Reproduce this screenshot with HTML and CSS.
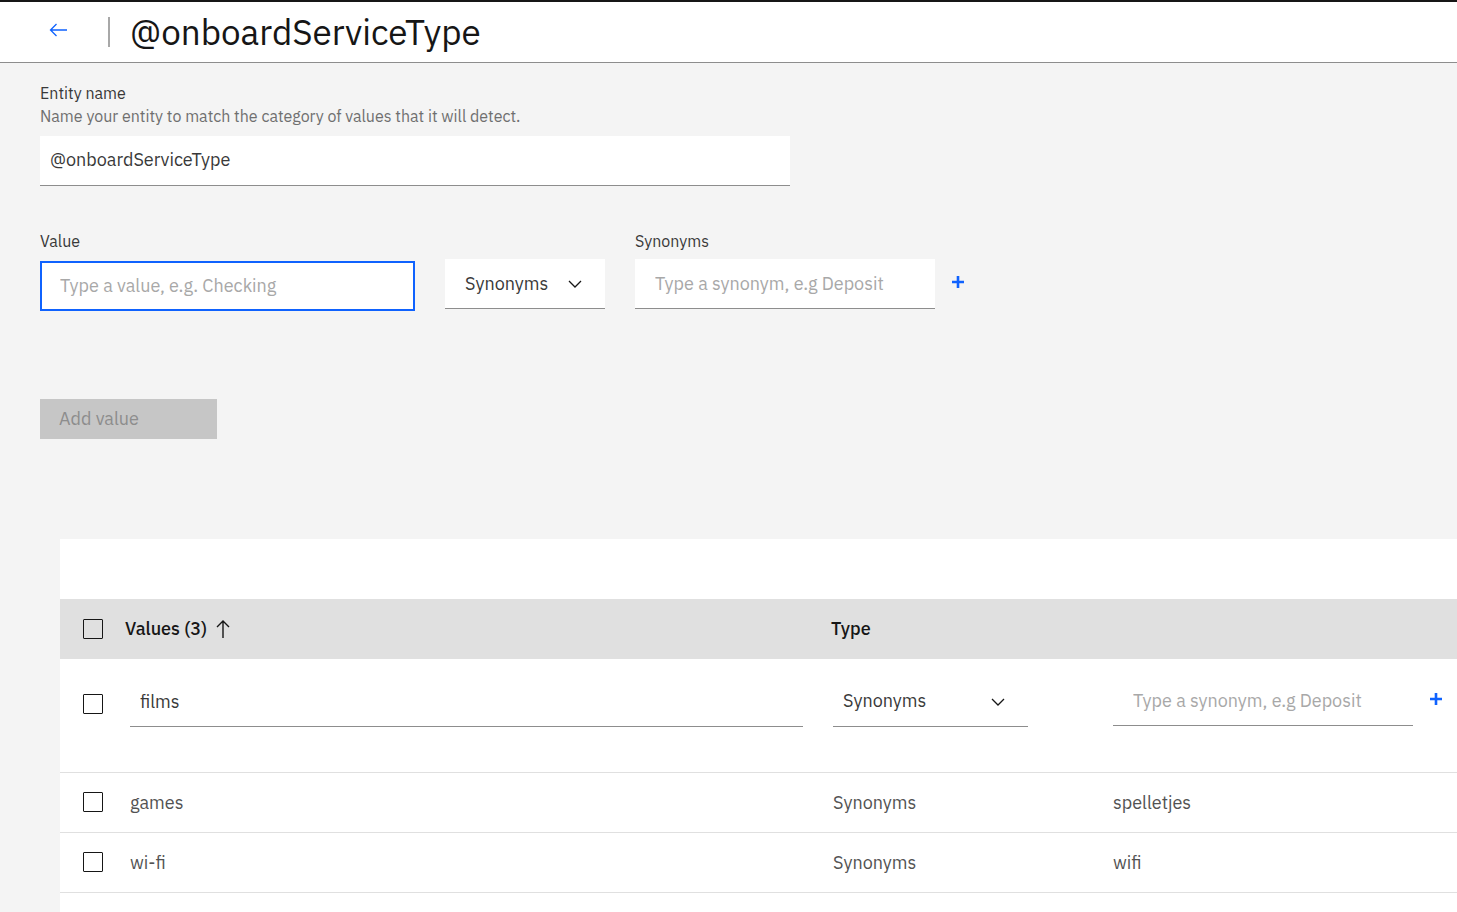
FILE: index.html
```html
<!DOCTYPE html>
<html lang="en">
<head>
<meta charset="utf-8">
<meta name="viewport" content="width=device-width, initial-scale=1">
<title>@onboardServiceType</title>
<link rel="stylesheet" href="styles.css">
</head>
<body class="page">
<header class="header">
  <a class="back" href="#" aria-label="Back">
    <svg width="20" height="20" viewBox="0 0 20 20" fill="none" stroke="currentColor" stroke-width="1.3"><path d="M18 10H1.500M7.500 4L1.500 10l6 6"/></svg>
  </a>
  <h1 class="title">@onboardServiceType</h1>
</header>
<main class="main">
  <form class="form">
    <div class="entity">
      <label class="label" for="entity">Entity name</label>
      <p class="helper" id="entity-help">Name your entity to match the category of values that it will detect.</p>
      <input class="input input-entity" id="entity" type="text" value="@onboardServiceType" aria-describedby="entity-help">
    </div>
    <div class="value-row">
      <div class="field field-value">
        <label class="label" for="value">Value</label>
        <input class="input input-active" id="value" type="text" placeholder="Type a value, e.g. Checking">
      </div>
      <div class="select field-type">
        <select class="input select-box" aria-label="Value type"><option>Synonyms</option><option>Patterns</option></select>
        <svg class="chevron" width="14" height="8" viewBox="0 0 14 8" fill="none" stroke="currentColor" stroke-width="1.3"><path d="M1 1l6 6 6-6"/></svg>
      </div>
      <div class="field field-synonym">
        <label class="label" for="synonym">Synonyms</label>
        <input class="input" id="synonym" type="text" placeholder="Type a synonym, e.g Deposit">
      </div>
      <button class="plus" type="button" aria-label="Add synonym">
        <svg width="12" height="12" viewBox="0 0 12 12" fill="none" stroke="currentColor" stroke-width="2.6"><path d="M6 0v12M0 6h12"/></svg>
      </button>
    </div>
    <button class="add" type="submit" disabled>Add value</button>
  </form>
  <section class="panel">
    <table class="table">
      <colgroup><col class="col-check"><col><col class="col-type"><col class="col-synonyms"></colgroup>
      <thead>
        <tr>
          <th class="cell-check"><input class="check" type="checkbox" aria-label="Select all values"></th>
          <th aria-sort="ascending"><button class="sort" type="button">Values (3)
            <svg width="14" height="18" viewBox="0 0 14 18" fill="none" stroke="currentColor" stroke-width="1.4"><path d="M7 18V1M1 7l6-6 6 6"/></svg></button></th>
          <th>Type</th>
          <th aria-label="Synonyms"></th>
        </tr>
      </thead>
      <tbody>
        <tr class="row-edit">
          <td class="cell-check"><input class="check" type="checkbox" aria-label="Select films"></td>
          <td class="cell-value"><input class="input" type="text" value="films" aria-label="Value"></td>
          <td class="cell-type">
            <div class="select">
              <select class="input select-box" aria-label="Type"><option>Synonyms</option><option>Patterns</option></select>
              <svg class="chevron" width="14" height="8" viewBox="0 0 14 8" fill="none" stroke="currentColor" stroke-width="1.3"><path d="M1 1l6 6 6-6"/></svg>
            </div>
          </td>
          <td class="cell-synonyms">
            <div class="synonym-edit">
              <input class="input" type="text" placeholder="Type a synonym, e.g Deposit" aria-label="Synonym for films">
              <button class="plus" type="button" aria-label="Add synonym for films">
                <svg width="12" height="12" viewBox="0 0 12 12" fill="none" stroke="currentColor" stroke-width="2.6"><path d="M6 0v12M0 6h12"/></svg>
              </button>
            </div>
          </td>
        </tr>
        <tr>
          <td class="cell-check"><input class="check" type="checkbox" aria-label="Select games"></td>
          <td class="cell-value">games</td><td>Synonyms</td><td>spelletjes</td>
        </tr>
        <tr>
          <td class="cell-check"><input class="check" type="checkbox" aria-label="Select wi-fi"></td>
          <td class="cell-value">wi-fi</td><td>Synonyms</td><td>wifi</td>
        </tr>
      </tbody>
    </table>
  </section>
</main>
</body>
</html>
```

FILE: styles.css
```css
* {
  box-sizing: border-box;
}

.page {
  display: flex;
  flex-direction: column;
  min-height: 100vh;
  margin: 0;
  background: #f4f4f4;
  color: #393939;
  font-family: "IBM Plex Sans", Roboto, "Liberation Sans", sans-serif;
  font-size: 18px;
  font-weight: 400;
  line-height: 24px;
}

.header {
  display: flex;
  align-items: center;
  min-height: 63px;
  padding: 0 49px;
  border-top: 2px solid #161616;
  border-bottom: 1px solid #8d8d8d;
  background: #fff;
}

.back {
  display: flex;
  width: 59px;
  padding-bottom: 4px;
  color: #0f62fe;
}

.title {
  margin: 0;
  padding-left: 20px;
  border-left: 2px solid #a8a8a8;
  color: #161616;
  font-size: 35px;
  font-weight: 400;
  line-height: 30px;
}

.main {
  display: flex;
  flex: 1;
  flex-direction: column;
}

.form {
  padding: 20px 40px 100px;
}

.entity {
  max-width: 750px;
}

.label,
.helper {
  display: block;
  margin: 0;
  font-size: 16px;
  line-height: 20px;
}

.helper {
  margin: 3px 0 10px;
  color: #6f6f6f;
}

.input {
  display: block;
  width: 100%;
  height: 50px;
  padding: 0 20px;
  border: 0;
  border-bottom: 1px solid #8d8d8d;
  border-radius: 0;
  outline: 0;
  background: #fff;
  color: #393939;
  font: inherit;
}

.input::placeholder {
  color: #a8a8a8;
  opacity: 1;
}

.input-entity {
  padding: 0 10px 2px;
}

.input-active {
  padding: 0 18px 2px;
  border: 2px solid #0f62fe;
}

.value-row {
  display: flex;
  align-items: flex-start;
  margin-top: 45px;
}

.field {
  display: grid;
  gap: 8px;
}

.field-value {
  flex: 0 1 375px;
  gap: 10px;
}

.field-type {
  flex: 0 0 160px;
  margin: 28px 30px 0;
}

.field-synonym {
  flex: 0 1 300px;
}

.select {
  display: grid;
  align-items: center;
}

.select-box,
.chevron {
  grid-area: 1 / 1;
}

.select-box {
  appearance: none;
}

.chevron {
  justify-self: end;
  margin-right: 23px;
  color: #161616;
  pointer-events: none;
}

.plus {
  display: flex;
  padding: 17px;
  border: 0;
  background: none;
  color: #0f62fe;
}

.value-row .plus {
  margin-top: 28px;
}

.add {
  display: block;
  width: 177px;
  height: 40px;
  margin-top: 88px;
  padding: 0 19px;
  border: 0;
  background: #c6c6c6;
  color: #8d8d8d;
  font: inherit;
  text-align: left;
}

.panel {
  flex: 1;
  margin-left: 60px;
  padding-top: 60px;
  background: #fff;
}

.table {
  width: 100%;
  border-collapse: separate;
  border-spacing: 0;
  table-layout: fixed;
}

.col-check {
  width: 65px;
}

.col-type {
  width: 280px;
}

.col-synonyms {
  width: 346px;
}

.table th,
.table td {
  height: 60px;
  padding: 0;
  text-align: left;
}

.table th {
  background: #e0e0e0;
  color: #161616;
  font-weight: 500;
}

.table td {
  padding-left: 2px;
  border-bottom: 1px solid #e0e0e0;
  color: #525252;
}

.table .cell-check {
  padding-left: 23px;
}

.table td.cell-check {
  padding-bottom: 1px;
}

.table .cell-value {
  padding-left: 5px;
}

.check {
  display: block;
  width: 20px;
  height: 20px;
  margin: 0;
  border: 1px solid #161616;
  border-radius: 1px;
  appearance: none;
}

.sort {
  display: flex;
  align-items: center;
  gap: 9px;
  padding: 0;
  border: 0;
  background: none;
  color: inherit;
  font: inherit;
}

.table .row-edit td {
  height: 114px;
  padding-bottom: 28px;
}

.table .row-edit .cell-check {
  padding-bottom: 24px;
}

.table .row-edit .cell-synonyms {
  padding-bottom: 30px;
}

.row-edit .cell-value {
  padding-right: 28px;
}

.row-edit .cell-value .input,
.row-edit .select-box {
  padding: 0 10px;
}

.row-edit .select {
  max-width: 195px;
}

.synonym-edit {
  display: grid;
  grid-template-columns: 300px auto;
}
```
